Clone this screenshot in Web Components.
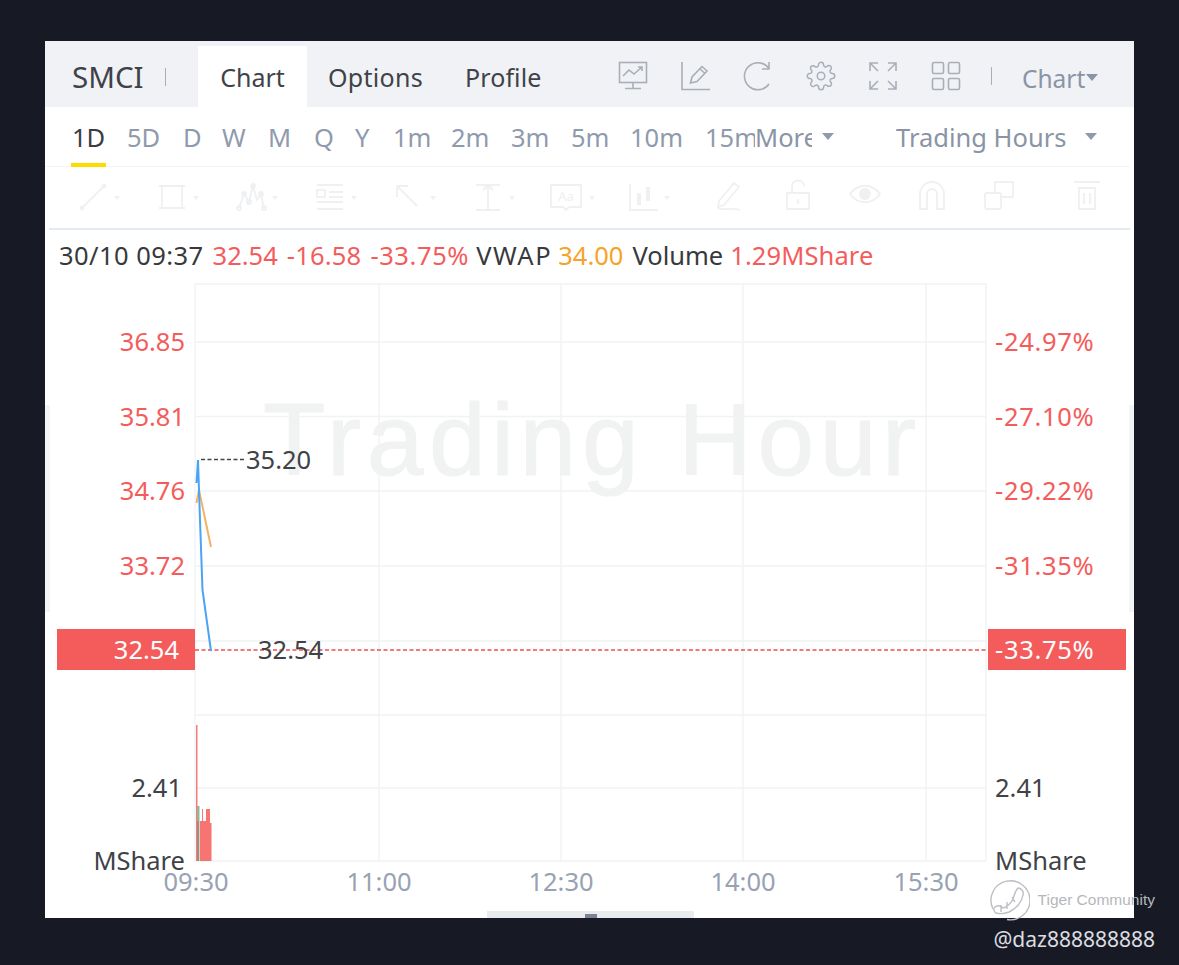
<!DOCTYPE html>
<html>
<head>
<meta charset="utf-8">
<title>SMCI</title>
<style>
  html, body { margin: 0; background: #171a25; }
  body { width: 1179px; height: 965px; overflow: hidden; position: relative; font-family: "Noto Sans", "Liberation Sans", sans-serif; }
  quote-panel { margin: 41px 0 0 45px; }
</style>
</head>
<body>
<quote-panel>
  <top-bar symbol="SMCI"></top-bar>
  <period-bar></period-bar>
  <draw-tools></draw-tools>
  <quote-line></quote-line>
  <price-chart></price-chart>
</quote-panel>
<tiger-mark></tiger-mark>

<script>
const FONT = '"Noto Sans", "Liberation Sans", sans-serif';

class QuotePanel extends HTMLElement {
  constructor() {
    super();
    this.attachShadow({mode: 'open'});
    this.shadowRoot.innerHTML = `
      <style>
        :host { display: flex; flex-direction: column; width: 1089px; height: 877px; background: #fff; overflow: hidden; position: relative; }
        .side { position: absolute; top: 364px; width: 5px; height: 207px; background: #f3f4f6; }
        .left { left: 0; }
        .right { right: 0; }
        .handle { position: absolute; left: 442px; bottom: 0; width: 207px; height: 7px; background: #e9ebef; display: flex; justify-content: center; align-items: flex-end; }
        .handle i { width: 12px; height: 4px; background: #7b8290; }
      </style>
      <slot></slot>
      <div class="side left"></div>
      <div class="side right"></div>
      <div class="handle"><i></i></div>
    `;
  }
}

class TopBar extends HTMLElement {
  constructor() {
    super();
    this.attachShadow({mode: 'open'});
    this.shadowRoot.innerHTML = `
      <style>
        :host { display: flex; align-items: flex-end; height: 66px; flex: none; background: #f0f2f5; color: #3f4349; font-size: 25px; font-family: ${FONT}; }
        .sym { width: 153px; height: 61px; display: flex; align-items: center; padding-left: 27px; box-sizing: border-box; font-size: 29.5px; }
        .sym b { font-weight: 400; width: 93px; }
        .sep { width: 1px; height: 18px; background: #a9adb5; flex: none; }
        .tab { height: 61px; display: flex; align-items: center; }
        .on { background: #fff; width: 109px; justify-content: center; }
        .opt { margin-left: 21px; letter-spacing: .3px; }
        .pro { margin-left: 42px; letter-spacing: .1px; }
        .icons { display: flex; align-items: center; height: 66px; margin-left: 77px; gap: 32.5px; padding-top: 4px; box-sizing: border-box; }
        svg { width: 30px; height: 30px; fill: none; stroke: #a9aeb8; stroke-width: 1.6; flex: none; }
        .chart { height: 66px; display: flex; align-items: center; color: #8a94a6; margin-left: 30px; padding-top: 8px; box-sizing: border-box; font-size: 24.5px; }
        .chart .sep { margin-right: 30px; margin-top: -4px; }
        .caret { width: 0; height: 0; border: 6.5px solid transparent; border-top: 7px solid #8a94a6; border-bottom: 0; margin-left: 1px; margin-top: -2px; }
      </style>
      <div class="sym"><b></b><span class="sep"></span></div>
      <div class="tab on">Chart</div>
      <div class="tab opt">Options</div>
      <div class="tab pro">Profile</div>
      <div class="icons">
        <svg viewBox="0 0 30 30"><rect x="1.5" y="1.5" width="27" height="20"/><path d="M5 15l6-6 5 4 8-7M20 6h4v4M15 22v5M7 27.5h16"/></svg>
        <svg viewBox="0 0 30 30"><path d="M1 1v27.5h28M9.5 22l1.5-6L21 5.5l5 4.5L16 20.5zM19 8l5 4.5"/></svg>
        <svg viewBox="0 0 30 30"><path d="M26 7.5A13.500 13.500 0 1 0 26 23M26 1v7h-7"/></svg>
        <svg viewBox="0 0 24 24" style="stroke-width:1.2"><circle cx="12" cy="12" r="3"/><path d="M19.4 15a1.65 1.65 0 0 0 .33 1.82l.06.06a2 2 0 0 1 0 2.83 2 2 0 0 1-2.83 0l-.06-.06a1.65 1.65 0 0 0-1.82-.33 1.65 1.65 0 0 0-1 1.51V21a2 2 0 0 1-2 2 2 2 0 0 1-2-2v-.09A1.65 1.65 0 0 0 9 19.4a1.65 1.65 0 0 0-1.82.33l-.06.06a2 2 0 0 1-2.83 0 2 2 0 0 1 0-2.83l.06-.06a1.65 1.65 0 0 0 .33-1.82 1.65 1.65 0 0 0-1.51-1H3a2 2 0 0 1-2-2 2 2 0 0 1 2-2h.09A1.65 1.65 0 0 0 4.6 9a1.65 1.65 0 0 0-.33-1.82l-.06-.06a2 2 0 0 1 0-2.83 2 2 0 0 1 2.83 0l.06.06a1.65 1.65 0 0 0 1.82.33H9a1.65 1.65 0 0 0 1-1.51V3a2 2 0 0 1 2-2 2 2 0 0 1 2 2v.09a1.65 1.65 0 0 0 1 1.51 1.65 1.65 0 0 0 1.82-.33l.06-.06a2 2 0 0 1 2.83 0 2 2 0 0 1 0 2.83l-.06.06a1.65 1.65 0 0 0-.33 1.82V9a1.65 1.65 0 0 0 1.51 1H21a2 2 0 0 1 2 2 2 2 0 0 1-2 2h-.09a1.65 1.65 0 0 0-1.51 1z"/></svg>
        <svg viewBox="0 0 30 30"><path d="M2 10V2h8M2 2l8 8M28 10V2h-8M28 2l-8 8M2 20v8h8M2 28l8-8M28 20v8h-8M28 28l-8-8"/></svg>
        <svg viewBox="0 0 30 30"><rect x="1.5" y="1.5" width="11" height="11" rx="1.5"/><rect x="17.5" y="1.5" width="11" height="11" rx="1.5"/><rect x="1.5" y="17.5" width="11" height="11" rx="1.5"/><rect x="17.5" y="17.5" width="11" height="11" rx="1.5"/></svg>
      </div>
      <div class="chart"><span class="sep"></span>Chart<span class="caret"></span></div>
    `;
  }

  connectedCallback() {
    this.shadowRoot.querySelector('b').textContent = this.getAttribute('symbol');
  }
}

class PeriodBar extends HTMLElement {
  constructor() {
    super();
    this.attachShadow({mode: 'open'});
    const periods = [['1D', 55], ['5D', 56], ['D', 39], ['W', 46], ['M', 46], ['Q', 41], ['Y', 38], ['1m', 58], ['2m', 60], ['3m', 60], ['5m', 59], ['10m', 75]];
    this.shadowRoot.innerHTML = `
      <style>
        :host { display: flex; align-items: center; height: 60px; flex: none; padding-left: 27px; box-sizing: border-box; margin-right: 4px; border-bottom: 1px solid #f3f4f6; color: #8f9aad; font-size: 25.5px; font-family: ${FONT}; }
        .p { height: 60px; display: flex; align-items: center; white-space: nowrap; flex: none; }
        .p span { height: 60px; display: flex; align-items: center; position: relative; }
        .active { color: #3a3d42; }
        .active span::after { content: ''; position: absolute; left: -1px; right: -1px; bottom: 0; height: 4px; background: #ffdc00; }
        .clip { overflow: hidden; white-space: nowrap; flex: none; }
        .m15 { width: 50px; }
        .more { width: 57px; color: #8a94a6; }
        .caret { width: 0; height: 0; border: 6.5px solid transparent; border-top: 7px solid #8f9aad; border-bottom: 0; flex: none; }
        .hours { margin-left: 62px; white-space: nowrap; color: #8a94a6; }
      </style>
      ${periods.map(([p, w], i) => `<div class="p${i ? '' : ' active'}" style="width:${w}px"><span>${p}</span></div>`).join('')}
      <div class="clip m15">15m</div>
      <div class="clip more">More</div>
      <span class="caret" style="margin-left:10px"></span>
      <div class="hours">Trading Hours</div>
      <span class="caret" style="margin-left:19px"></span>
    `;
  }
}

class DrawTools extends HTMLElement {
  constructor() {
    super();
    this.attachShadow({mode: 'open'});
    const first = [
      ['<circle cx="4" cy="26" r="1.5"/><circle cx="26" cy="4" r="1.5"/><path d="M5 25L25 5"/>', 79],
      ['<path d="M5 4h20v22H5zM2 4h3M25 4h3M2 26h3M25 26h3"/>', 79],
      ['<path d="M3 26l5-14 5 8 4-16 4 14 4-6 3 14"/><circle cx="8" cy="12" r="2"/><circle cx="17" cy="4" r="2"/><circle cx="25" cy="12" r="2"/><circle cx="3" cy="26" r="2"/><circle cx="13" cy="20" r="2"/><circle cx="28" cy="26" r="2"/>', 79],
      ['<path d="M2 3h26M2 27h26M14 10h14M14 15h14M2 20h26"/><rect x="2" y="8" width="8" height="7"/>', 79],
      ['<path d="M3 4l20 20M3 4h11M3 4v11"/>', 79],
      ['<path d="M3 3h24M3 28h24M15 3v25M10 8l5-5 5 5"/>', 76],
      ['<path d="M2 3h30v22H20l-3 3-3-3H2z"/><text x="17" y="19" font-size="13" fill="#eef0f2" stroke="none" text-anchor="middle">Aa</text>', 79],
      ['<path d="M2 2v26h28"/><path d="M11 11v12M20 5v14" stroke-width="4"/>', 79]
    ];
    const second = [
      '<path d="M4 22L19 4l5 4L9 26l-6 2zM3 29c5 3 14-1 22 2"/>',
      '<path d="M5 14h22v16H5zM10 14V8a6 6 0 0 1 12-1M16 20v5"/>',
      '<path d="M1 15c8-11 22-11 30 0-8 11-22 11-30 0z"/><circle cx="16" cy="15" r="5" fill="#eef0f2"/>',
      '<path d="M4 30V15a12 12 0 0 1 24 0v15h-7V15a5 5 0 0 0-10 0v15z"/>',
      '<rect x="2" y="14" width="16" height="16" rx="2"/><path d="M12 14V3h18v15H18"/>'
    ];
    const svg = (s, vb) => `<svg viewBox="0 0 ${vb} 32" style="width:${vb}px">${s}</svg>`;
    this.shadowRoot.innerHTML = `
      <style>
        :host { display: flex; align-items: center; height: 63px; flex: none; margin: 0 4px; padding-left: 29px; box-sizing: border-box; border-bottom: 2px solid #e3e9f0; }
        svg { height: 32px; fill: none; stroke: #eef0f2; stroke-width: 1.8; flex: none; overflow: visible; }
        .t { display: flex; align-items: center; flex: none; }
        .t i { width: 0; height: 0; border: 3.5px solid transparent; border-top: 4px solid #eef0f2; border-bottom: 0; margin-left: 6px; }
        .g { width: 67px; flex: none; }
        .sp { width: 8px; flex: none; }
      </style>
      ${first.map(([s, w]) => `<div class="t" style="width:${w}px">${svg(s, s.includes('Aa') ? 34 : 30)}<i></i></div>`).join('')}
      <div class="sp"></div>
      ${second.map(s => `<div class="g">${svg(s, 32)}</div>`).join('')}
      <div class="sp" style="width:21px"></div>
      <div>${svg('<path d="M3 3h26M8 9h16v21H8zM13 14v11M19 14v11"/>', 32)}</div>
    `;
  }
}

class QuoteLine extends HTMLElement {
  constructor() {
    super();
    this.attachShadow({mode: 'open'});
    this.shadowRoot.innerHTML = `
      <style>
        :host { display: flex; gap: 9px; height: 52px; flex: none; line-height: 50px; padding-left: 14px; color: #37393d; font-size: 25.5px; white-space: nowrap; font-family: ${FONT}; }
        .r { color: #f45c5c; }
        .o { color: #f6a32c; }
      </style>
      <span style="letter-spacing:.45px">30/10 09:37</span>
      <span class="r">32.54</span>
      <span class="r" style="letter-spacing:.2px">-16.58</span>
      <span class="r" style="letter-spacing:.6px;margin-right:-2px">-33.75%</span>
      <span style="letter-spacing:1.6px;margin-right:-3px">VWAP</span>
      <span class="o">34.00</span>
      <span style="margin-right:-2px">Volume</span>
      <span class="r" style="letter-spacing:.1px">1.29MShare</span>
    `;
  }
}

// chart coordinates below are the page's own, so viewBox starts at 45 282
class PriceChart extends HTMLElement {
  constructor() {
    super();
    this.attachShadow({mode: 'open'});
    const hLines = [284, 342, 416.5, 491, 566, 641, 715, 788, 861];
    const vLines = [195, 379, 561, 743, 926, 986];
    const left = [['36.85', 341], ['35.81', 416], ['34.76', 490], ['33.72', 565]];
    const right = [['-24.97%', 341], ['-27.10%', 416], ['-29.22%', 490], ['-31.35%', 565]];
    const times = [['09:30', 196], ['11:00', 379], ['12:30', 561], ['14:00', 743], ['15:30', 926]];
    const bars = [[200, 2, 821], [202, 1, 809], [203, 3, 821], [206, 4, 809], [210, 1.5, 823]];
    this.shadowRoot.innerHTML = `
      <style>
        :host { display: block; flex: 1; min-height: 0; }
        svg { display: block; width: 1089px; height: 636px; font-family: ${FONT}; font-size: 25.5px; }
        text { dominant-baseline: central; }
        .grid { stroke: #f1f2f4; stroke-width: 1.4; }
        .red { fill: #f45c5c; }
        .dark { fill: #3f4246; }
        .pct { letter-spacing: .7px; }
        .time { fill: #98a2b3; text-anchor: middle; }
        .end { text-anchor: end; }
        .mark { dominant-baseline: alphabetic; font-family: "Liberation Sans", sans-serif; font-size: 102px; letter-spacing: 5.6px; fill: #f1f2f2; stroke: #f1f2f2; stroke-width: 1.2; }
      </style>
      <svg viewBox="45 282 1089 636">
        <text class="mark" x="263" y="475">Trading Hour</text>
        ${hLines.map(y => `<line class="grid" x1="195" x2="986" y1="${y}" y2="${y}"/>`).join('')}
        ${vLines.map(x => `<line class="grid" x1="${x}" x2="${x}" y1="284" y2="861"/>`).join('')}
        ${left.map(([t, y]) => `<text class="red end" x="185" y="${y}">${t}</text>`).join('')}
        ${right.map(([t, y]) => `<text class="red pct" x="995" y="${y}">${t}</text>`).join('')}
        <rect x="57" y="629" width="138" height="41" fill="#f45c5c"/>
        <rect x="988" y="629" width="138" height="41" fill="#f45c5c"/>
        <text x="179" y="649" text-anchor="end" fill="#fff">32.54</text>
        <text class="pct" x="995" y="649" fill="#fff">-33.75%</text>
        <line x1="195" x2="988" y1="650" y2="650" stroke="#ef4f4f" stroke-width="1.3" stroke-dasharray="4 2.5"/>
        <line x1="201" x2="246" y1="459.5" y2="459.5" stroke="#444" stroke-width="1.4" stroke-dasharray="4 2.5"/>
        <text class="dark" x="246" y="459">35.20</text>
        <text class="dark" x="258" y="649">32.54</text>
        <polyline points="196.5,503 199,490 211,547" fill="none" stroke="#f5b266" stroke-width="2"/>
        <polyline points="196.5,483 198,460 200,520 202.5,590 211,651" fill="none" stroke="#4aa3f5" stroke-width="2"/>
        <rect x="196" y="725" width="1.5" height="136" fill="#f57a7a"/>
        <rect x="197" y="806" width="2.5" height="55" fill="#8fb79a"/>
        <rect x="197" y="821" width="2" height="40" fill="#a58c7a"/>
        ${bars.map(([x, w, y]) => `<rect x="${x}" y="${y}" width="${w}" height="${861 - y}" fill="#f77471"/>`).join('')}
        <text class="dark end" x="182" y="787">2.41</text>
        <text class="dark" x="995" y="787">2.41</text>
        <text class="dark end" x="185" y="860">MShare</text>
        <text class="dark" x="995" y="860">MShare</text>
        ${times.map(([t, x]) => `<text class="time" x="${x}" y="881">${t}</text>`).join('')}
      </svg>
    `;
  }
}

// the site's watermark lies over the panel corner and the dark page
class TigerMark extends HTMLElement {
  constructor() {
    super();
    this.attachShadow({mode: 'open'});
    this.shadowRoot.innerHTML = `
      <style>
        :host { position: absolute; right: 24px; top: 878px; width: 168px; display: flex; flex-direction: column; align-items: flex-end; font-family: ${FONT}; }
        .top { display: flex; align-items: center; height: 44px; }
        svg { width: 42px; height: 42px; fill: none; stroke: #bdbfc4; stroke-width: 1.4; flex: none; }
        .name { font-family: "Liberation Sans", sans-serif; font-size: 15.5px; color: #b5b7bb; margin-left: 8px; white-space: nowrap; }
        .at { color: #dcdde0; font-size: 21px; margin-top: 3px; white-space: nowrap; }
      </style>
      <div class="top">
        <svg viewBox="0 0 42 42"><path d="M5 30A19.500 19.500 0 1 1 19 40.500"/><path d="M30 9c3 0 6 3 5 7-1 7-7 14-14 17-4 1.500-9 2-13 1-2-1-3-4-1-6 3-2 6-1 8 1 4-1 8-5 10-9 1-3 2-8 5-11zM13 26v7M19 23v7M24 18l3 5"/></svg>
        <span class="name">Tiger Community</span>
      </div>
      <div class="at">@daz888888888</div>
    `;
  }
}

customElements.define('quote-panel', QuotePanel);
customElements.define('top-bar', TopBar);
customElements.define('period-bar', PeriodBar);
customElements.define('draw-tools', DrawTools);
customElements.define('quote-line', QuoteLine);
customElements.define('price-chart', PriceChart);
customElements.define('tiger-mark', TigerMark);
</script>
</body>
</html>
